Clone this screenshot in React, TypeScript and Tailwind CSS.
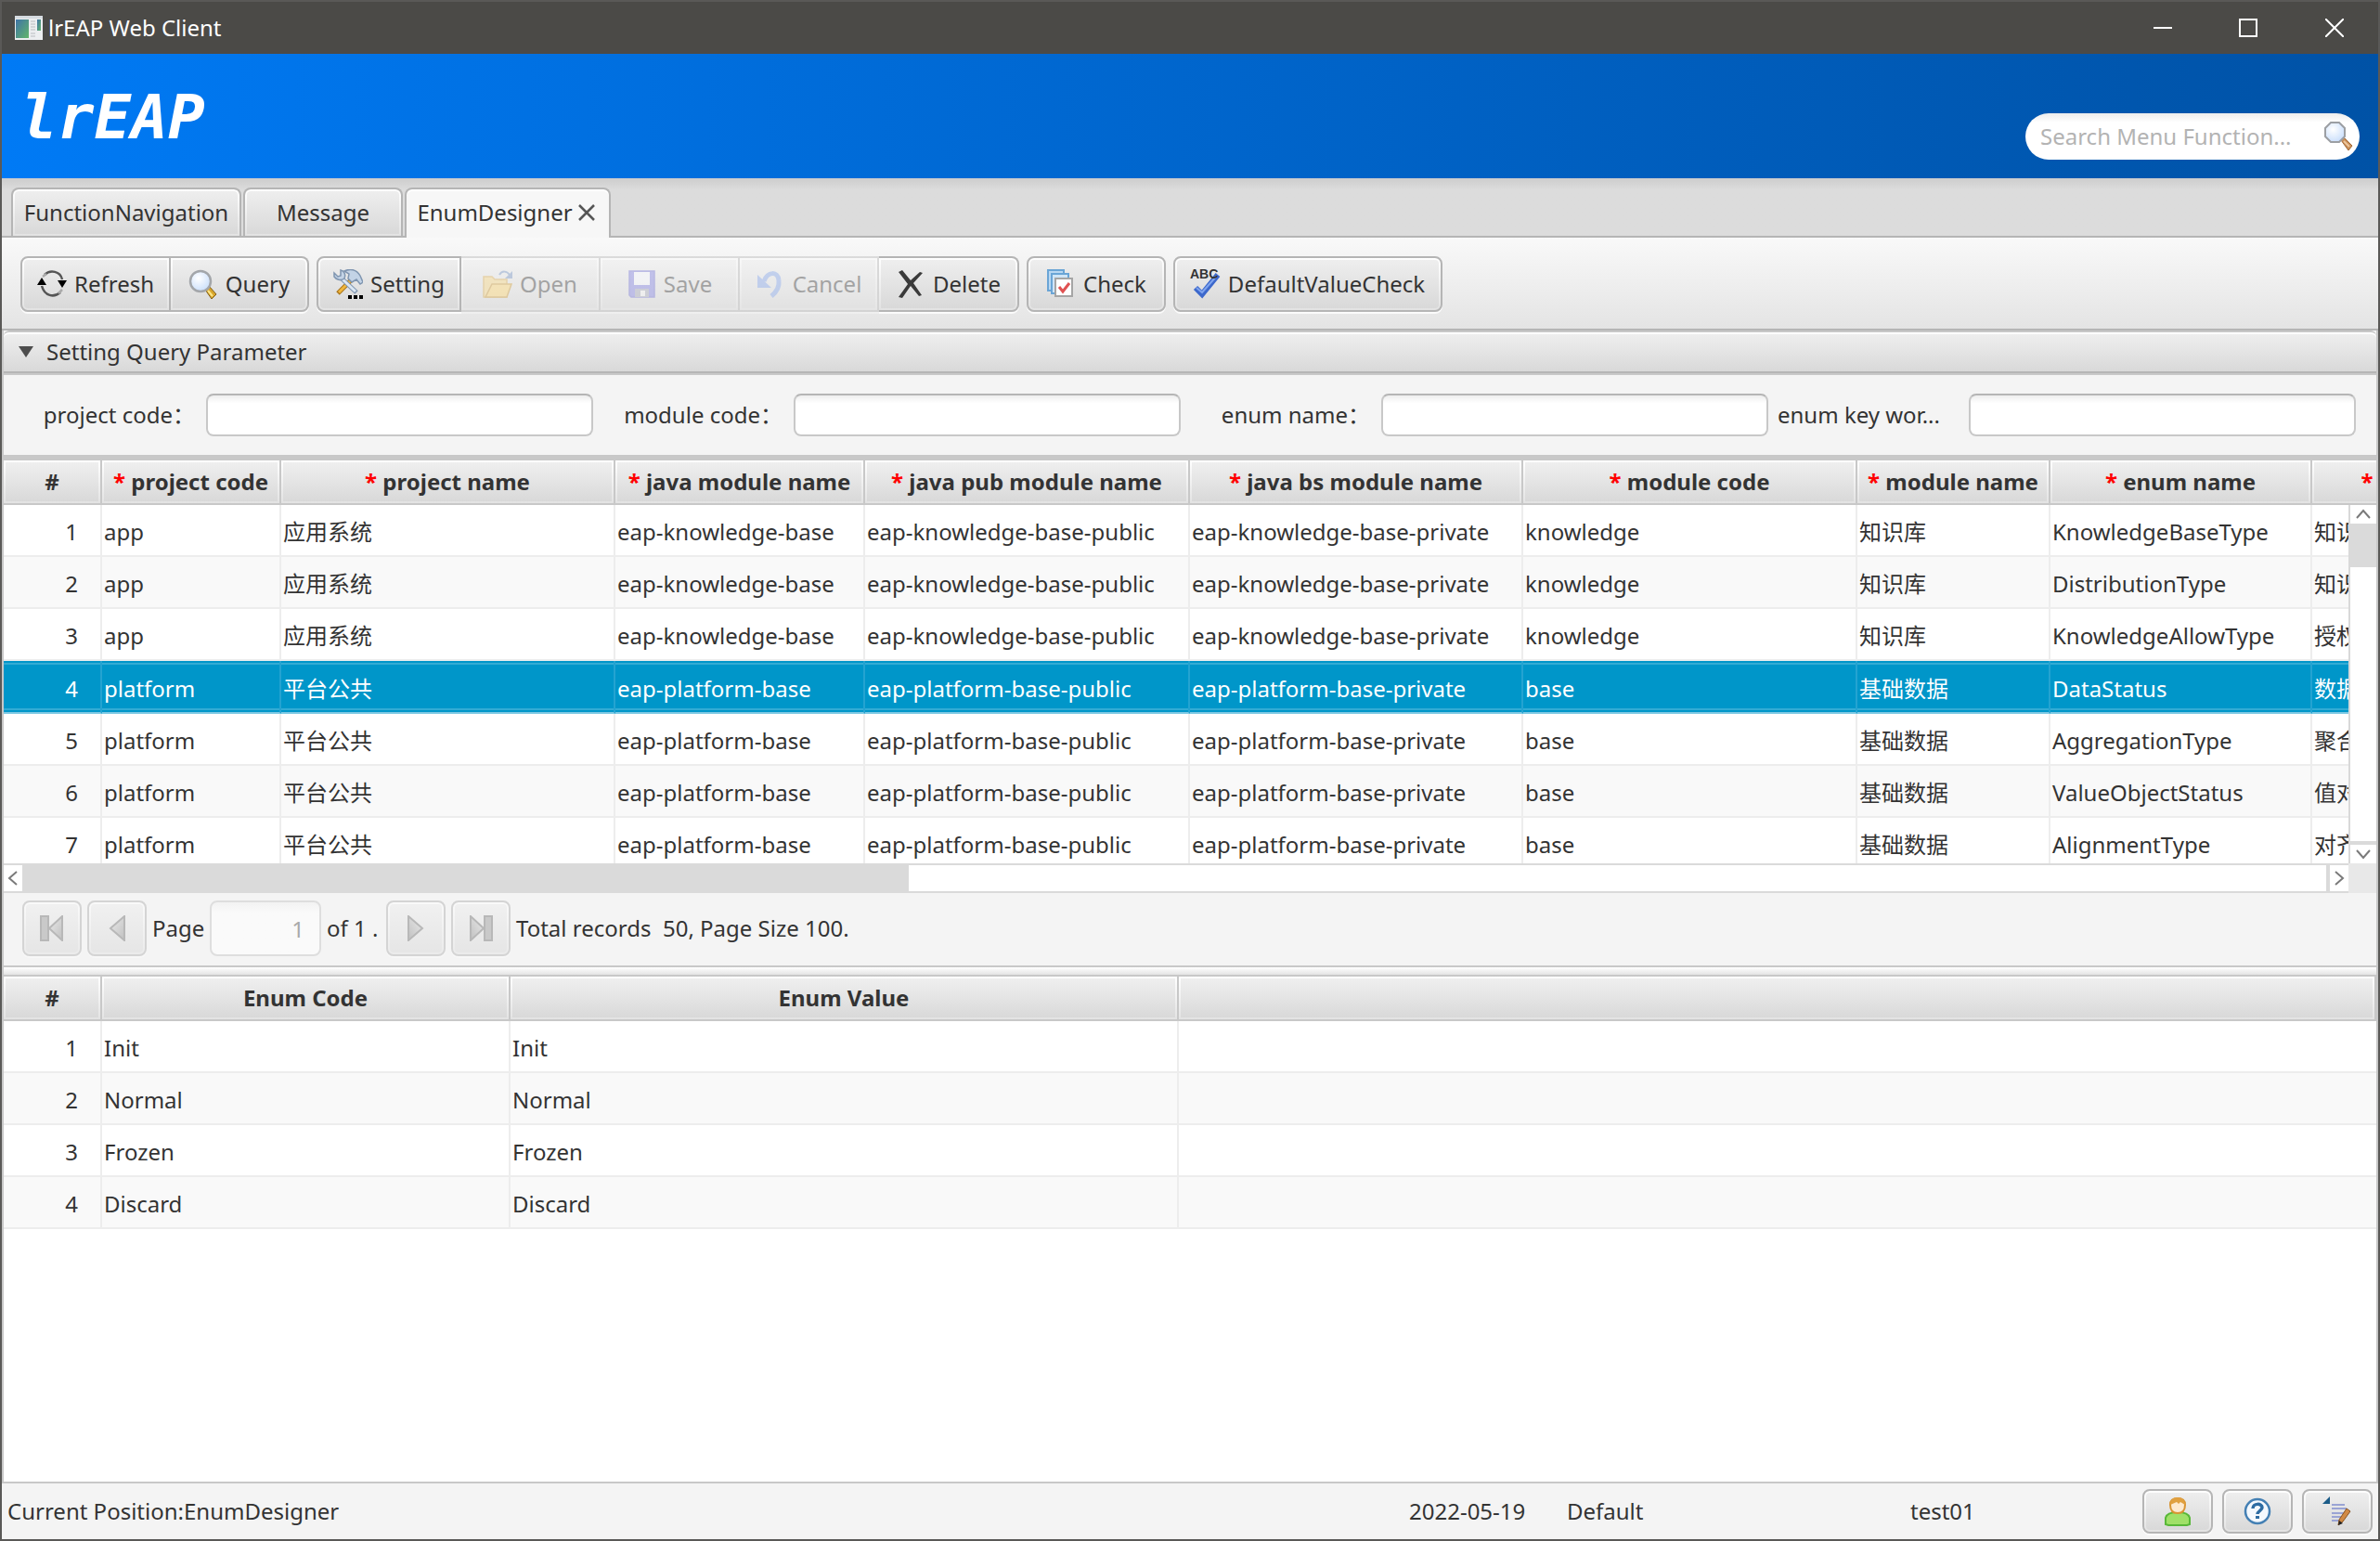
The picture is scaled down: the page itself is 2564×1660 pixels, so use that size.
import type { ReactNode } from "react";

type Tool = {
  label: string;
  icon: ReactNode;
  width: string;
  disabled?: boolean;
};

const BEVEL =
  "p-0.5 border-[#b5b5b5] [background:linear-gradient(#eeeeee,#d9d9d9)_content-box,linear-gradient(#ffffff,#e3e3e3)_padding-box] shadow-[0_2px_0_#fbfbfb]";

const HEAD_CELL =
  "h-12 p-0.5 border-r-2 border-b-2 border-[#c8c8c8] font-bold whitespace-nowrap [background:linear-gradient(#efefef,#d9d9d9)_content-box,linear-gradient(#ffffff,#e3e3e3)_padding-box]";

const columns = [
  { name: "project code", width: "w-[193px]" },
  { name: "project name", width: "w-[360px]" },
  { name: "java module name", width: "w-[269px]" },
  { name: "java pub module name", width: "w-[350px]" },
  { name: "java bs module name", width: "w-[359px]" },
  { name: "module code", width: "w-[360px]" },
  { name: "module name", width: "w-[208px]" },
  { name: "enum name", width: "w-[282px]" },
  { name: "", width: "w-[120px]" },
];

const app = ["app", "应用系统", "eap-knowledge-base", "eap-knowledge-base-public", "eap-knowledge-base-private", "knowledge", "知识库"];
const platform = ["platform", "平台公共", "eap-platform-base", "eap-platform-base-public", "eap-platform-base-private", "base", "基础数据"];

const rows = [
  [...app, "KnowledgeBaseType", "知识"],
  [...app, "DistributionType", "知识"],
  [...app, "KnowledgeAllowType", "授权"],
  [...platform, "DataStatus", "数据"],
  [...platform, "AggregationType", "聚合"],
  [...platform, "ValueObjectStatus", "值对"],
  [...platform, "AlignmentType", "对齐"],
];

const enumItems = ["Init", "Normal", "Frozen", "Discard"];

const selectedRow = 3;

function RefreshIcon() {
  return (
    <svg viewBox="0 0 32 32" className="size-8 shrink-0">
      <path d="M8 6C14 0 25 2 27 11" fill="none" stroke="#555" strokeWidth="2.5" />
      <path d="M25 25C18 31 8 29 5 18" fill="none" stroke="#555" strokeWidth="2.5" />
      <path d="M0 17l5-8 5 8z" fill="#000" />
      <path d="M22 12h10l-5 8z" fill="#000" />
      <path d="M6 8l4-3M23 26l4-4" stroke="#aaa" strokeWidth="2.5" />
    </svg>
  );
}

function MagnifierIcon({ small = false }: { small?: boolean }) {
  return (
    <svg viewBox="0 0 32 32" className="size-8 shrink-0">
      <defs>
        <radialGradient id="lens" cx="40%" cy="35%" r="75%">
          <stop offset="0" stopColor="#ffffff" />
          <stop offset="1" stopColor="#c4dbfb" />
        </radialGradient>
      </defs>
      {small ? (
        <>
          <path d="M18 20l3-3 9 9-4 5z" fill="#c98d55" stroke="#a06a3a" />
          <path d="M21 21l6 6" stroke="#ecc69d" strokeWidth="2" />
          <path d="M7 1h9l6 6v9l-6 6H7l-6-6V7z" fill="url(#lens)" stroke="#9c9fa3" strokeWidth="2" />
        </>
      ) : (
        <>
          <path d="M18 22l4-4 8 9-5 5z" fill="#d9a62a" stroke="#7d5c18" />
          <path d="M21 23l5 6" stroke="#fbe58a" strokeWidth="2" />
          <circle cx="13" cy="13" r="11" fill="url(#lens)" stroke="#a3a6aa" strokeWidth="2.5" />
        </>
      )}
    </svg>
  );
}

function SettingIcon() {
  return (
    <svg viewBox="0 0 32 32" className="size-8 shrink-0">
      <path d="M20 11L5 26" stroke="#a8741a" strokeWidth="5" />
      <path d="M19 12L6 25" stroke="#f0b63c" strokeWidth="3" />
      <path d="M12 2c6-3 13-2 17 5l3 7-3 2-4-5-5 3-4-4 1-5z" fill="#c3d3e6" stroke="#7f95b0" strokeWidth="1.5" />
      <path d="M8 9l17 16" stroke="#7f95b0" strokeWidth="5" />
      <path d="M8 9l16 15" stroke="#dbe7f3" strokeWidth="3" />
      <path d="M1 4l4 4 3-1V1c4 1 6 5 4 9-4 3-9 1-11-2z" fill="#c3d3e6" stroke="#7f95b0" strokeWidth="1.5" />
      <path d="M16 28h4v4h-4zM22 28h4v4h-4zM28 28h4v4h-4z" fill="#000" />
    </svg>
  );
}

function OpenIcon() {
  return (
    <svg viewBox="0 0 32 32" className="size-8 shrink-0">
      <path d="M1 30V8h9l3 3h13v19z" fill="#f5d27a" stroke="#d8a94a" strokeWidth="1.5" />
      <path d="M3 30l7-14h21l-5 14z" fill="#fcd268" stroke="#c9952c" strokeWidth="1.5" />
      <path d="M18 6c3-5 8-4 11 0" fill="none" stroke="#6f8fc0" strokeWidth="2" />
      <path d="M32 2v8h-8z" fill="#6f8fc0" />
    </svg>
  );
}

function SaveIcon() {
  return (
    <svg viewBox="0 0 32 32" className="size-8 shrink-0">
      <path d="M3 2h27v28H5l-2-2z" fill="#7a7ae0" stroke="#6a6ad0" strokeWidth="1.5" />
      <path d="M8 3h17v14H8z" fill="#f7f9ff" />
      <path d="M9 21h15v9H9z" fill="#9fa3b5" />
      <path d="M15 23h5v6h-5z" fill="#f2f2f2" />
    </svg>
  );
}

function CancelIcon() {
  return (
    <svg viewBox="0 0 32 32" className="size-8 shrink-0">
      <path d="M9 13C13 2 24 2 25 12c1 8-3 13-8 17" fill="none" stroke="#7d9fe8" strokeWidth="5" />
      <path d="M2 6l15 14H2z" fill="#7d9fe8" />
    </svg>
  );
}

function DeleteIcon() {
  return (
    <svg viewBox="0 0 32 32" className="size-8 shrink-0">
      <path d="M3 3l4-2 9 11L26 3l3 1-10 11 9 13-3 1-9-11-9 13-4-1 10-14z" fill="#3a3a3a" />
    </svg>
  );
}

function CheckIcon() {
  return (
    <svg viewBox="0 0 32 32" className="size-8 shrink-0">
      <path d="M2 1h17v22H2z" fill="#b9d8f2" stroke="#6aa5d6" strokeWidth="2" />
      <path d="M6 5h18v21H6z" fill="#cfe5f7" stroke="#6aa5d6" strokeWidth="2" />
      <path d="M10 10h18v19H10z" fill="#fff" stroke="#a5a5a5" strokeWidth="2" />
      <path d="M14 19l4 5 7-9" fill="none" stroke="#e05252" strokeWidth="3" />
    </svg>
  );
}

function SpellIcon() {
  return (
    <svg viewBox="0 0 32 32" className="size-8 shrink-0 overflow-visible">
      <path d="M5 20l7 7L29 6" fill="none" stroke="#3c68cc" strokeWidth="6" />
      <path d="M6 20l6 5L28 7" fill="none" stroke="#7fa4ee" strokeWidth="2" />
      <text x="-1" y="10" fontSize="14" fontWeight="700" fill="#333" fontFamily="Liberation Sans">
        ABC
      </text>
    </svg>
  );
}

const toolGroups: Tool[][] = [
  [
    { label: "Refresh", icon: <RefreshIcon />, width: "w-[162px]" },
    { label: "Query", icon: <MagnifierIcon />, width: "w-[149px]" },
  ],
  [
    { label: "Setting", icon: <SettingIcon />, width: "w-[156px]" },
    { label: "Open", icon: <OpenIcon />, width: "w-[150px]", disabled: true },
    { label: "Save", icon: <SaveIcon />, width: "w-[150px]", disabled: true },
    { label: "Cancel", icon: <CancelIcon />, width: "w-[150px]", disabled: true },
    { label: "Delete", icon: <DeleteIcon />, width: "w-[151px]" },
  ],
  [{ label: "Check", icon: <CheckIcon />, width: "w-[150px]" }],
  [{ label: "DefaultValueCheck", icon: <SpellIcon />, width: "w-[290px]" }],
];

function TitleBar() {
  return (
    <header className="flex h-14 shrink-0 items-center bg-[#4b4a47] pl-3.5 text-white">
      <svg viewBox="0 0 30 26" className="mr-1.5 h-[26px] w-[30px]">
        <defs>
          <linearGradient id="pane" x1="0" y1="0" x2="1" y2="1">
            <stop offset="0" stopColor="#3f74a8" />
            <stop offset="1" stopColor="#62b56a" />
          </linearGradient>
        </defs>
        <path d="M0 0h30v26H0z" fill="#eceef0" />
        <path d="M0 0h30v3H0z" fill="#d5dbe0" />
        <path d="M1 4h14v20H1z" fill="url(#pane)" />
        <path d="M17 6h5M17 9h5M17 12h5M17 15h5M17 19h5M17 22h5" stroke="#b9bcc0" />
        <path d="M24 4h4v12h-4z" fill="url(#pane)" />
      </svg>
      <h1 className="flex-1">lrEAP Web Client</h1>
      <div className="flex">
        <button aria-label="Minimize" className="flex w-[92px] justify-center">
          <svg viewBox="0 0 20 20" className="size-5">
            <path d="M0 10h20" stroke="#fff" strokeWidth="2" />
          </svg>
        </button>
        <button aria-label="Maximize" className="flex w-[92px] justify-center">
          <svg viewBox="0 0 20 20" className="size-5">
            <path d="M1 1h18v18H1z" fill="none" stroke="#fff" strokeWidth="2" />
          </svg>
        </button>
        <button aria-label="Close" className="flex w-[94px] justify-center">
          <svg viewBox="0 0 20 20" className="size-5">
            <path d="M0 0l20 20M20 0L0 20" stroke="#fff" strokeWidth="2" />
          </svg>
        </button>
      </div>
    </header>
  );
}

function Banner() {
  return (
    <div className="flex h-[134px] shrink-0 items-start justify-between bg-linear-to-r from-[#007af5] to-[#0052a6] px-5">
      <div className="pt-[30px] font-['DejaVu_Sans_Mono',monospace] text-[66px] leading-[78px] font-bold text-white italic">
        lrEAP
      </div>
      <div className="mt-16 flex h-[50px] w-[360px] items-center rounded-full bg-linear-to-b from-[#ececec] to-white to-20% pr-1.5 pl-4">
        <input
          aria-label="Search Menu Function"
          placeholder="Search Menu Function..."
          className="min-w-0 flex-1 outline-none placeholder:text-[#b3b3b3]"
        />
        <button aria-label="Search">
          <MagnifierIcon small />
        </button>
      </div>
    </div>
  );
}

function Tabs() {
  const tab = "flex items-center justify-center rounded-t-lg border-2 border-b-0 border-[#b5b5b5] p-0.5";
  const idle =
    "h-[52px] [background:linear-gradient(#eeeeee,#d9d9d9)_content-box,linear-gradient(#ffffff,#e3e3e3)_padding-box]";
  return (
    <nav className="flex h-16 shrink-0 items-end gap-0.5 border-b-2 border-[#b5b5b5] bg-linear-to-b from-[#cdcdcd] to-[#dcdcdc] to-20% pl-2.5">
      <button className={`${tab} ${idle} w-[248px]`}>FunctionNavigation</button>
      <button className={`${tab} ${idle} w-[172px]`}>Message</button>
      <button className={`${tab} -mb-0.5 h-[54px] w-[222px] gap-1.5 bg-[#f7f7f7] pr-1.5 pb-1 shadow-[inset_0_2px_0_#fff]`}>
        EnumDesigner
        <svg viewBox="0 0 18 18" className="size-[18px]">
          <path d="M1 1l16 16M17 1L1 17" stroke="#555" strokeWidth="2.5" />
        </svg>
      </button>
    </nav>
  );
}

function ToolBar() {
  return (
    <div className="flex h-[100px] shrink-0 gap-2 border-b-2 border-[#b5b5b5] bg-linear-to-b from-[#f9f9f9] to-[#e4e4e4] px-5 pt-5">
      {toolGroups.map((group) => (
        <div key={group[0].label} className="flex">
          {group.map((tool) => (
            <button
              key={tool.label}
              disabled={tool.disabled}
              className={`flex h-[60px] items-center justify-center gap-2 border-2 border-l-0 first:rounded-l-lg first:border-l-2 last:rounded-r-lg disabled:opacity-40 ${BEVEL} ${tool.width}`}
            >
              {tool.icon}
              {tool.label}
            </button>
          ))}
        </div>
      ))}
    </div>
  );
}

function QueryPanel() {
  const fields = [
    { label: "project code：", align: "text-right" },
    { label: "module code：", align: "text-right" },
    { label: "enum name：", align: "text-right" },
    { label: "enum key wor...", align: "text-left" },
  ];
  return (
    <section>
      <button className="flex h-[46px] w-full items-center gap-3.5 rounded-t-md border-t-2 border-b-2 border-t-[#c8c8c8] border-b-[#b5b5b5] bg-linear-to-b from-[#efefef] to-[#d9d9d9] pl-4 shadow-[inset_0_2px_0_#fff]">
        <svg viewBox="0 0 16 12" className="h-3 w-4">
          <path d="M0 0h16l-8 12z" fill="#4d4d4d" />
        </svg>
        Setting Query Parameter
      </button>
      <form className="grid grid-cols-4 gap-2.5 border-t-2 border-b-6 border-[#c8c8c8] bg-[#f4f4f4] py-5 pr-[22px] pl-3">
        {fields.map((field) => (
          <label key={field.label} className="flex items-center gap-2.5">
            <span className={`w-[196px] pr-0.5 whitespace-nowrap ${field.align}`}>{field.label}</span>
            <input className="h-[46px] min-w-0 flex-1 rounded-lg border-2 border-[#c8c8c8] border-t-[#b5b5b5] bg-linear-to-b from-[#eeeeee] to-white to-20% px-3 outline-none" />
          </label>
        ))}
      </form>
    </section>
  );
}

function DataTable() {
  return (
    <div className="relative h-[434px] shrink-0 overflow-hidden bg-white">
      <table className="w-[2607px] table-fixed border-separate border-spacing-0">
        <thead>
          <tr>
            <th className={`${HEAD_CELL} w-[106px]`}>#</th>
            {columns.map((col, i) => (
              <th key={i} className={`${HEAD_CELL} ${col.width}`}>
                <span className="text-[#ff0000]">*</span> {col.name}
              </th>
            ))}
          </tr>
        </thead>
        <tbody>
          {rows.map((row, i) => {
            const cell =
              i === selectedRow
                ? "h-[57px] border-r-[#24a3d1] border-b-[#7cc8e3] bg-[#0096c9] text-white shadow-[inset_0_2px_0_#0096c9,inset_0_4px_0_#33abd4,inset_0_-2px_0_#0096c9,inset_0_-4px_0_#33abd4]"
                : i % 2
                  ? "h-14 border-[#ededed] bg-[#f9f9f9]"
                  : "h-14 border-[#ededed] bg-white";
            return (
              <tr key={i}>
                <td className={`border-r-2 border-b-2 pt-1 pr-6 text-right ${cell}`}>{i + 1}</td>
                {row.map((value, j) => (
                  <td key={j} className={`border-r-2 border-b-2 pt-1 pl-0.5 whitespace-nowrap ${cell}`}>
                    {value}
                  </td>
                ))}
              </tr>
            );
          })}
        </tbody>
      </table>
      <div className="absolute top-12 right-0 bottom-0 flex w-[30px] flex-col border-l-2 border-[#d9d9d9] bg-white">
        <button aria-label="Scroll up" className="flex h-5 items-center justify-center">
          <Chevron className="size-4" />
        </button>
        <div className="h-[47px] bg-[#dadada]" />
        <div className="flex-1" />
        <button aria-label="Scroll down" className="flex h-6 items-center justify-center border-t-4 border-[#dadada]">
          <Chevron className="size-4 rotate-180" />
        </button>
      </div>
    </div>
  );
}

function Chevron({ className }: { className: string }) {
  return (
    <svg viewBox="0 0 16 16" className={className}>
      <path d="M1 12l7-8 7 8" fill="none" stroke="#7a7a7a" strokeWidth="2" />
    </svg>
  );
}

function HorizontalScroll() {
  return (
    <div className="flex h-8 shrink-0 bg-[#e8e8e8] pr-[30px]">
      <div className="flex flex-1 border-y-2 border-[#dadada] bg-white">
        <button aria-label="Scroll left" className="flex w-5 items-center justify-center">
          <Chevron className="size-4 -rotate-90" />
        </button>
        <div className="flex-1">
          <div className="h-full w-5/13 bg-[#dadada]" />
        </div>
        <button aria-label="Scroll right" className="flex w-6 items-center justify-center border-l-4 border-[#dadada]">
          <Chevron className="size-4 rotate-90" />
        </button>
      </div>
    </div>
  );
}

function PageButton({ label, bar, flip }: { label: string; bar?: boolean; flip?: boolean }) {
  return (
    <button
      aria-label={label}
      disabled
      className={`flex h-[60px] w-16 items-center justify-center rounded-lg border-2 disabled:opacity-50 ${BEVEL}`}
    >
      <svg viewBox="0 0 28 28" className={flip ? "size-7 -scale-x-100" : "size-7"}>
        <defs>
          <linearGradient id="arrow" x1="0" y1="0" x2="1" y2="1">
            <stop offset="0" stopColor="#e2e2e2" />
            <stop offset="1" stopColor="#8d8d8d" />
          </linearGradient>
        </defs>
        {bar && <path d="M2 1h8v26H2z" fill="#a0a0a0" stroke="#7d7d7d" strokeWidth="2" />}
        <path
          d={bar ? "M25 1v26L11 14z" : "M22 1v26L7 14z"}
          fill="url(#arrow)"
          stroke="#7d7d7d"
          strokeWidth="2"
        />
      </svg>
    </button>
  );
}

function Pager() {
  return (
    <div className="flex h-20 shrink-0 items-center gap-1.5 border-b-2 border-[#c8c8c8] bg-[#f4f4f4] pb-0.5 pl-5">
      <PageButton label="First page" bar />
      <PageButton label="Previous page" />
      <label htmlFor="page" className="w-14">
        Page
      </label>
      <input
        id="page"
        disabled
        defaultValue="1"
        className="h-[60px] w-[120px] rounded-lg border-2 border-[#dedede] bg-linear-to-b from-[#f2f2f2] to-[#fafafa] to-20% pr-4 text-right text-[#a9a9a9]"
      />
      <span className="w-[58px]">of 1 .</span>
      <PageButton label="Next page" flip />
      <PageButton label="Last page" bar flip />
      <span className="whitespace-pre">Total records  50, Page Size 100.</span>
    </div>
  );
}

function EnumTable() {
  return (
    <div className="min-h-0 flex-1 overflow-hidden bg-white">
      <table className="w-full table-fixed border-separate border-spacing-0">
        <thead>
          <tr>
            <th className={`${HEAD_CELL} w-[106px]`}>#</th>
            <th className={`${HEAD_CELL} w-[440px]`}>Enum Code</th>
            <th className={`${HEAD_CELL} w-[720px]`}>Enum Value</th>
            <td className={`${HEAD_CELL} border-r-0`} />
          </tr>
        </thead>
        <tbody>
          {enumItems.map((item, i) => {
            const cell = i % 2 ? "border-[#ededed] bg-[#f9f9f9]" : "border-[#ededed] bg-white";
            return (
              <tr key={item}>
                <td className={`h-14 border-r-2 border-b-2 pt-1 pr-6 text-right ${cell}`}>{i + 1}</td>
                <td className={`h-14 border-r-2 border-b-2 pt-1 pl-0.5 ${cell}`}>{item}</td>
                <td className={`h-14 border-r-2 border-b-2 pt-1 pl-0.5 ${cell}`}>{item}</td>
                <td className={`h-14 border-b-2 ${cell}`} />
              </tr>
            );
          })}
        </tbody>
      </table>
    </div>
  );
}

function StatusBar() {
  const button = `flex h-12 w-[76px] items-center justify-center rounded-lg border-2 ${BEVEL}`;
  return (
    <footer className="flex h-[62px] shrink-0 items-center border-t-2 border-[#c8c8c8] bg-[#f4f4f4] px-1.5">
      <span className="flex-1">Current Position:EnumDesigner</span>
      <span className="w-[170px]">2022-05-19</span>
      <span className="w-[370px]">Default</span>
      <span className="w-[250px]">test01</span>
      <div className="flex gap-2.5">
        <button aria-label="User" className={button}>
          <svg viewBox="0 0 32 32" className="size-8">
            <path d="M3 30v-7c1-4 5-6 13-6s12 2 13 6v7l-3 1H6z" fill="#a0e068" stroke="#58b838" strokeWidth="2" />
            <path d="M8 9c0-5 3-7 8-7s8 2 8 7c0 6-3 9-8 9s-8-3-8-9z" fill="#fde9cf" stroke="#d99432" strokeWidth="2" />
            <path d="M8 9c0-5 3-8 8-8s8 3 8 8l-5-3-2 2-2-2z" fill="#e0a040" />
          </svg>
        </button>
        <button aria-label="Help" className={button}>
          <svg viewBox="0 0 32 32" className="size-8">
            <circle cx="16" cy="16" r="13" fill="#f4f9fe" stroke="#4480b4" strokeWidth="2.5" />
            <path d="M11 13c0-6 10-6 10-1 0 3-5 4-5 7" fill="none" stroke="#2d6ca2" strokeWidth="3.5" />
            <path d="M14 21h4v3h-4z" fill="#2d6ca2" />
          </svg>
        </button>
        <button aria-label="Edit notes" className={button}>
          <svg viewBox="0 0 32 32" className="size-8">
            <path d="M8 0v8H0z" fill="#1c5c88" />
            <path d="M10 9h14M10 13h16M10 18h14M10 22h12M10 26h10" stroke="#9aa4d4" strokeWidth="2" />
            <path d="M26 13l4 3-8 11-5 4 1-6z" fill="#d18a45" stroke="#8a5420" />
            <path d="M17 31l1-5 4 3z" fill="#222" />
          </svg>
        </button>
      </div>
    </footer>
  );
}

export default function App() {
  return (
    <div className="flex h-screen flex-col overflow-hidden border-2 border-[#5a5957] bg-[#f4f4f4] font-['Noto_Sans','Noto_Sans_CJK_SC',sans-serif] text-2xl text-[#333333]">
      <TitleBar />
      <Banner />
      <Tabs />
      <ToolBar />
      <main className="flex min-h-0 flex-1 flex-col border-x-2 border-[#c8c8c8]">
        <QueryPanel />
        <DataTable />
        <HorizontalScroll />
        <Pager />
        <div className="h-2.5 shrink-0 border-b-2 border-[#c8c8c8] bg-linear-to-b from-white to-[#e4e4e4]" />
        <EnumTable />
      </main>
      <StatusBar />
    </div>
  );
}
